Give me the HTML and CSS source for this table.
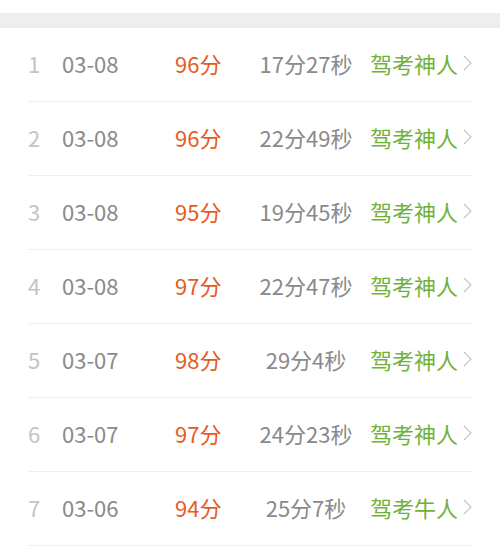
FILE: index.html
```html
<!DOCTYPE html>
<html lang="zh">
<head>
<meta charset="utf-8">
<link rel="stylesheet" href="styles.css">
</head>
<body>
<div class="top"></div>
<div class="band"></div>
<ul class="list">
  <li class="row"><span class="idx">1</span><span class="date">03-08</span><span class="score">96分</span><span class="time">17分27秒</span><span class="title">驾考神人</span><svg class="chev" viewBox="0 0 9 16"><path d="M1 1 L8 8 L1 15"/></svg></li>
  <li class="row"><span class="idx">2</span><span class="date">03-08</span><span class="score">96分</span><span class="time">22分49秒</span><span class="title">驾考神人</span><svg class="chev" viewBox="0 0 9 16"><path d="M1 1 L8 8 L1 15"/></svg></li>
  <li class="row"><span class="idx">3</span><span class="date">03-08</span><span class="score">95分</span><span class="time">19分45秒</span><span class="title">驾考神人</span><svg class="chev" viewBox="0 0 9 16"><path d="M1 1 L8 8 L1 15"/></svg></li>
  <li class="row"><span class="idx">4</span><span class="date">03-08</span><span class="score">97分</span><span class="time">22分47秒</span><span class="title">驾考神人</span><svg class="chev" viewBox="0 0 9 16"><path d="M1 1 L8 8 L1 15"/></svg></li>
  <li class="row"><span class="idx">5</span><span class="date">03-07</span><span class="score">98分</span><span class="time">29分4秒</span><span class="title">驾考神人</span><svg class="chev" viewBox="0 0 9 16"><path d="M1 1 L8 8 L1 15"/></svg></li>
  <li class="row"><span class="idx">6</span><span class="date">03-07</span><span class="score">97分</span><span class="time">24分23秒</span><span class="title">驾考神人</span><svg class="chev" viewBox="0 0 9 16"><path d="M1 1 L8 8 L1 15"/></svg></li>
  <li class="row"><span class="idx">7</span><span class="date">03-06</span><span class="score">94分</span><span class="time">25分7秒</span><span class="title">驾考牛人</span><svg class="chev" viewBox="0 0 9 16"><path d="M1 1 L8 8 L1 15"/></svg></li>
</ul>
</body>
</html>
```
FILE: styles.css
```css
html, body {
  margin: 0;
  padding: 0;
  background: #ffffff;
}
body {
  font-family: "Noto Sans CJK SC", sans-serif;
  font-size: 22px;
  line-height: 30px;
}
.top {
  height: 13px;
}
.band {
  height: 15px;
  background: #eeeeee;
}
.list {
  list-style: none;
  margin: 0 28px;
  padding: 0;
}
.row {
  display: grid;
  grid-template-columns: 34px 113px 71px 120px 1fr 12px;
  align-items: center;
  height: 69px;
  padding-bottom: 4px;
  border-bottom: 1px solid #efefef;
}
.idx {
  color: #c4c4c4;
}
.date {
  color: #8a8a8a;
}
.score {
  color: #e85b1c;
}
.time {
  color: #8a8a8a;
  text-align: center;
}
.title {
  color: #6fb23a;
  padding-left: 4px;
}
.chev {
  width: 9px;
  height: 16px;
  justify-self: end;
  fill: none;
  stroke: #c4c4c4;
  stroke-width: 1.1;
}
```
